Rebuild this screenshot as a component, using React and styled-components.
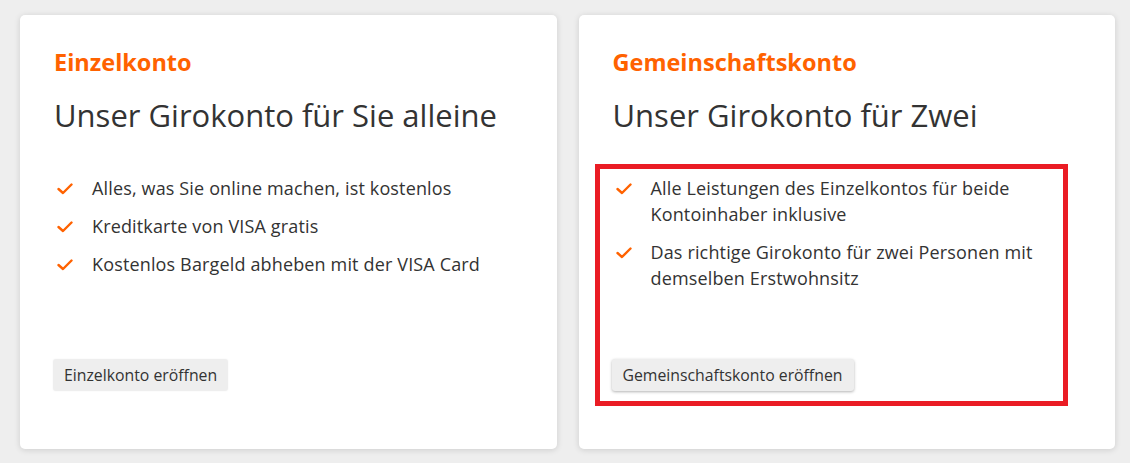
import React from "react";
import styled, { createGlobalStyle } from "styled-components";

const Global = createGlobalStyle`
  html, body { margin: 0; padding: 0; background: #eeeeee; }
  body { font-family: "Open Sans", "Noto Sans", sans-serif; color: #333333; }
  * { box-sizing: border-box; }
`;

const Page = styled.div`
  display: grid;
  grid-template-columns: 1fr 1fr;
  gap: 22px;
  padding: 15px 15px 14px 20px;
`;

const Card = styled.section`
  background: #ffffff;
  border-radius: 5px;
  box-shadow: 0 1px 6px rgba(0, 0, 0, 0.14);
  height: 434px;
  padding: 31px 33px 58px 34px;
  display: flex;
  flex-direction: column;
`;

const Kicker = styled.h3`
  margin: 0;
  font-size: 23.5px;
  line-height: 32px;
  font-weight: 700;
  color: #ff6200;
`;

const Title = styled.h2`
  margin: 17px 0 0;
  font-size: 31px;
  line-height: 40px;
  font-weight: 400;
  color: #333333;
`;

const Body = styled.div`
  position: relative;
  flex: 1;
  display: flex;
  flex-direction: column;
  margin-top: 40px;
  &::after {
    content: "";
    display: ${(p) => (p.$highlight ? "block" : "none")};
    position: absolute;
    top: -11px;
    left: -18px;
    right: 14px;
    bottom: -15px;
    border: 5px solid #ea1c24;
    pointer-events: none;
  }
`;

const List = styled.ul`
  list-style: none;
  margin: 0;
  padding: 0;
  flex: 1;
`;

const Item = styled.li`
  display: grid;
  grid-template-columns: 38px 1fr;
  font-size: 18px;
  letter-spacing: 0.15px;
  line-height: 26px;
  margin-bottom: 12px;
  color: #333333;
`;

const Check = styled.svg`
  width: 16px;
  height: 12px;
  margin: 8px 0 0 3px;
`;

const Button = styled.button`
  align-self: flex-start;
  font-family: inherit;
  font-size: 15.8px;
  line-height: 20px;
  color: #333333;
  background: #eeeeee;
  border: none;
  border-radius: 3px;
  padding: 6px 11px;
  height: 32px;
  margin-left: -1px;
  box-shadow: ${(p) =>
    p.$raised ? "0 1px 3px rgba(0,0,0,0.3)" : "0 0 2px rgba(0,0,0,0.06)"};
`;

const Tick = () => (
  <Check viewBox="0 0 16 12">
    <polyline
      points="1.5,6 6,10 14.5,1.5"
      fill="none"
      stroke="#ff6200"
      strokeWidth="2.4"
      strokeLinecap="round"
      strokeLinejoin="round"
    />
  </Check>
);

const cards = [
  {
    kicker: "Einzelkonto",
    title: "Unser Girokonto für Sie alleine",
    items: [
      "Alles, was Sie online machen, ist kostenlos",
      "Kreditkarte von VISA gratis",
      "Kostenlos Bargeld abheben mit der VISA Card",
    ],
    button: "Einzelkonto eröffnen",
  },
  {
    kicker: "Gemeinschaftskonto",
    title: "Unser Girokonto für Zwei",
    items: [
      "Alle Leistungen des Einzelkontos für beide Kontoinhaber inklusive",
      "Das richtige Girokonto für zwei Personen mit demselben Erstwohnsitz",
    ],
    button: "Gemeinschaftskonto eröffnen",
    highlight: true,
  },
];

export default function App() {
  return (
    <>
      <Global />
      <Page>
        {cards.map((c) => (
          <Card key={c.kicker}>
            <Kicker>{c.kicker}</Kicker>
            <Title>{c.title}</Title>
            <Body $highlight={c.highlight}>
              <List>
                {c.items.map((t) => (
                  <Item key={t}>
                    <Tick />
                    <span>{t}</span>
                  </Item>
                ))}
              </List>
              <Button $raised={c.highlight}>{c.button}</Button>
            </Body>
          </Card>
        ))}
      </Page>
    </>
  );
}
